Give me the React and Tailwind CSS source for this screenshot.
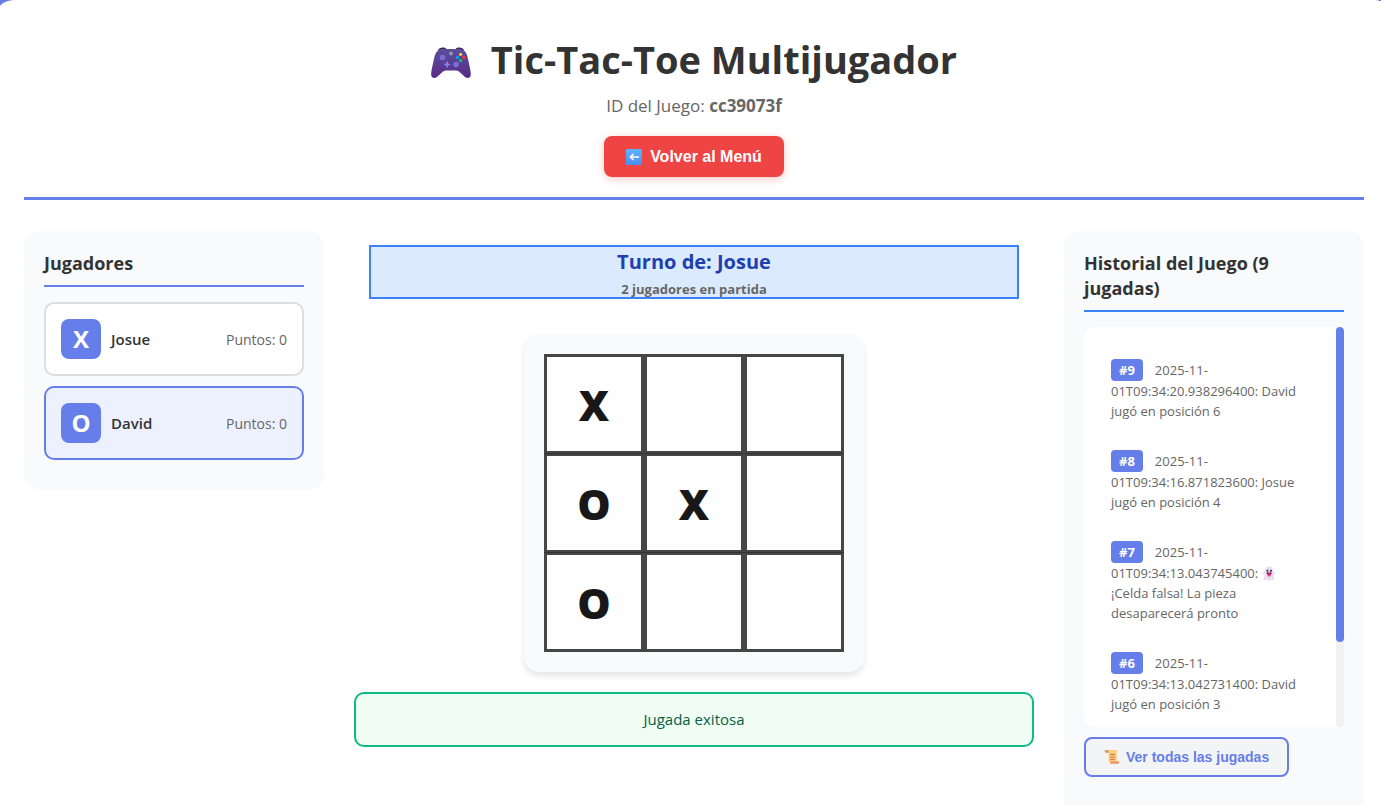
import React from "react";

function Gamepad() {
  return (
    <svg viewBox="0 0 40 32" className="mt-2 h-8 w-10" aria-hidden="true">
      <defs>
        <linearGradient id="pad" x1="0" y1="0" x2="0" y2="1">
          <stop offset="0" stopColor="#5a509c" />
          <stop offset="1" stopColor="#5b2a86" />
        </linearGradient>
      </defs>
      <path d="M7 3c1-2.500 6-3.500 8-1.500v2H7zM33 3c-1-2.500-6-3.500-8-1.500v2h8z" fill="#4a1450" />
      <path d="M8 3c2-1.500 5-1.500 7-1h10c2-.5 5-.5 7 1 3 1 4.500 6 5.500 11s2.500 11 2.300 14c-.2 3-4 4-6.300 1.500L28 24.500c-1-.8-2-1-3-1H15c-1 0-2 .2-3 1l-5.500 5C4.200 32 .4 31 .2 28 0 25 1.500 19 2.500 14S5 4 8 3z" fill="url(#pad)" />
      <circle cx="11.500" cy="10.500" r="2.800" fill="#7a6fd6" />
      <circle cx="25" cy="17.500" r="2.800" fill="#7a6fd6" />
      <circle cx="20" cy="6.500" r="1.900" fill="#9c94b4" />
      <path d="M15.300 14.500h1.600v2.200h2.200v1.600h-2.200v2.200h-1.600v-2.200h-2.200v-1.600h2.200z" fill="#8b83f0" />
      <circle cx="29.600" cy="7.400" r="1.700" fill="#f9c23c" />
      <circle cx="32.700" cy="10.500" r="1.700" fill="#f8312f" />
      <circle cx="26.500" cy="10.500" r="1.700" fill="#00a6ed" />
      <circle cx="29.600" cy="13.600" r="1.700" fill="#00d26a" />
    </svg>
  );
}

function LeftArrow() {
  return (
    <svg viewBox="0 0 16 16" className="size-4" aria-hidden="true">
      <defs>
        <linearGradient id="tile" x1="0" y1="0" x2="0" y2="1">
          <stop offset="0" stopColor="#5fb4ff" />
          <stop offset="1" stopColor="#4a8df0" />
        </linearGradient>
      </defs>
      <rect width="16" height="16" rx="1" fill="url(#tile)" />
      <path d="M12.500 8H4.500M7 5.500L4.300 8 7 10.500" fill="none" stroke="#fff" strokeWidth="1.700" strokeLinecap="round" strokeLinejoin="round" />
    </svg>
  );
}

function Ghost() {
  return (
    <svg viewBox="0 0 14 15" className="inline-block h-[15px] w-3.5 align-[-3px]" aria-hidden="true">
      <path d="M7 .5c2.700 0 4 2 4.200 5 .8.300 2 .8 2.300 1.700-.4 1-1.300 1.100-2 .8.100 2 .4 4 1 6-1.300.6-2-.7-3-.3-.9.500-1.500.6-2.500.6s-1.700-.1-2.600-.6c-1-.4-1.700.9-3 .3.700-2 1-4 1.100-6-.7.300-1.600.2-2-.8.300-.9 1.500-1.400 2.300-1.700C3 2.500 4.300.5 7 .5z" fill="#e9dcee" />
      <circle cx="5.500" cy="4.800" r="1" fill="#321b41" />
      <circle cx="9" cy="4.800" r="1" fill="#321b41" />
      <path d="M4.500 6.500h5.200c0 1.700-1 2.500-2.600 2.500S4.500 8.200 4.500 6.500z" fill="#5b1a4a" />
      <path d="M5.800 7.300h2.700v1.900c0 1.800-2.700 1.800-2.700 0z" fill="#f8216a" />
    </svg>
  );
}

function Scroll() {
  return (
    <svg viewBox="0 0 16 16" className="size-4" aria-hidden="true">
      <path d="M2.500 1h11.300c-.9.700-1 1.500-1 2.500V13H4.500V4H2.500z" fill="#ffce7c" />
      <path d="M.8 1.200h3.700v2.600H2.200C1 3.800.5 2 .8 1.200z" fill="#d9915f" />
      <path d="M6.200 12.300h9.100c.3 1.200-.3 2.500-1.500 2.500H5.500c1-.6 1-1.500.7-2.500z" fill="#e79a62" />
      <path d="M6 5.500h5M6 8h5M6 10.300h5" stroke="#c9764d" strokeWidth="1" />
    </svg>
  );
}

const players = [
  { mark: "X", name: "Josue", points: 0, active: false },
  { mark: "O", name: "David", points: 0, active: true },
];

const cells = ["X", "", "", "O", "X", "", "O", "", ""];

const moves = [
  { n: 9, time: "2025-11-01T09:34:20.938296400:", text: "David jugó en posición 6" },
  { n: 8, time: "2025-11-01T09:34:16.871823600:", text: "Josue jugó en posición 4" },
  { n: 7, time: "2025-11-01T09:34:13.043745400:", ghost: true, text: "¡Celda falsa! La pieza desaparecerá pronto" },
  { n: 6, time: "2025-11-01T09:34:13.042731400:", text: "David jugó en posición 3" },
];

function Header() {
  return (
    <header className="flex flex-col items-center border-b-3 border-[#667eea] pb-5 text-center">
      <h1 className="flex items-center gap-5 text-[38px] leading-[58px] font-bold text-[#333]">
        <Gamepad />
        Tic-Tac-Toe Multijugador
      </h1>
      <p className="mt-1 text-[17px] leading-7 text-[#666]">
        ID del Juego: <strong className="font-bold">cc39073f</strong>
      </p>
      <button
        type="button"
        className="mt-4 flex h-[41px] items-center gap-2 rounded-lg bg-[#ef4444] px-[22px] font-['Liberation_Sans',Arial,sans-serif] text-base font-bold text-white shadow-[0_2px_8px_rgba(239,68,68,0.3)]"
      >
        <LeftArrow />
        Volver al Menú
      </button>
    </header>
  );
}

function Players() {
  return (
    <aside className="rounded-[15px] bg-[#f8fafc] px-5 pt-5 pb-[30px]">
      <h2 className="border-b-2 border-[#667eea] pb-[9px] text-lg leading-[25px] font-bold text-[#333]">Jugadores</h2>
      <ul className="mt-[15px] flex flex-col gap-2.5">
        {players.map((p) => (
          <li
            key={p.name}
            className={
              "flex items-center gap-2.5 rounded-[10px] border-2 p-[15px] " +
              (p.active ? "border-[#667eea] bg-[#edf1fe]" : "border-[#ddd] bg-white")
            }
          >
            <span className="flex size-10 items-center justify-center rounded-lg bg-[#667eea] text-2xl font-bold text-white">{p.mark}</span>
            <span className="flex-1 text-[15px] font-semibold text-[#333]">{p.name}</span>
            <span className="text-[14px] text-[#666]">Puntos: {p.points}</span>
          </li>
        ))}
      </ul>
    </aside>
  );
}

function Board() {
  return (
    <main className="flex flex-col items-center pt-3.5">
      <div className="flex w-full flex-col px-[15px]">
        <div className="border-2 border-[#3b82f6] bg-[#dbeafe] text-center font-bold">
          <p className="text-xl leading-[30px] text-[#1e40af]">Turno de: Josue</p>
          <p className="mt-1 text-[13px] leading-4 text-[#666]">2 jugadores en partida</p>
        </div>
      </div>
      <div className="mt-[35px] rounded-[15px] bg-[#f8fafc] p-5 shadow-[0_4px_6px_rgba(0,0,0,0.1)]">
        <div className="grid grid-cols-[repeat(3,100px)] pt-px">
          {cells.map((c, i) => (
            <button
              key={i}
              type="button"
              aria-label={"Celda " + i}
              className="-mt-px flex h-[100px] items-center justify-center border-3 border-[#333] bg-white text-[42px] font-extrabold text-black opacity-90"
            >
              {c}
            </button>
          ))}
        </div>
      </div>
      <p className="mt-5 w-full rounded-[10px] border-2 border-[#10b981] bg-[#f0fdf4] py-[13px] text-center text-[15px] leading-[25px] text-[#065f46]" role="status">
        Jugada exitosa
      </p>
    </main>
  );
}

function History() {
  return (
    <aside className="rounded-[15px] bg-[#f8fafc] px-5 pt-5 pb-14">
      <h2 className="border-b-2 border-[#3b82f6] pb-[9px] text-lg leading-[25px] font-bold text-[#333]">
        Historial del Juego (9 jugadas)
      </h2>
      <div className="mt-[15px] flex h-[400px] overflow-hidden rounded-l-[10px] rounded-r bg-white">
        <ol className="flex flex-1 flex-col gap-[29px] pt-8 pr-6 pl-[27px] text-[13px] leading-5 text-[#666]">
          {moves.map((m) => (
            <li key={m.n}>
              <span className="mr-3 inline-block rounded-[4px] bg-[#667eea] px-2 leading-[22px] font-bold text-white">#{m.n}</span>
              {m.ghost ? (
                <>
                  {m.time} <Ghost /> {m.text}
                </>
              ) : (
                `${m.time} ${m.text}`
              )}
            </li>
          ))}
        </ol>
        <div className="w-2 rounded bg-[#f1f1f1]">
          <div className="h-[315px] rounded bg-[#667eea]" />
        </div>
      </div>
      <button
        type="button"
        className="mt-2.5 flex h-10 items-center gap-1.5 rounded-lg border-2 border-[#667eea] bg-[#f3f4f6] px-[18px] font-['Liberation_Sans',Arial,sans-serif] text-sm font-bold text-[#667eea]"
      >
        <Scroll />
        Ver todas las jugadas
      </button>
    </aside>
  );
}

export default function App() {
  return (
    <div className="h-screen overflow-x-hidden overflow-y-auto bg-linear-to-br from-[#667eea] to-[#764ba2] font-['Open_Sans','Noto_Sans',sans-serif] [scrollbar-width:none]">
      <div className="-mr-[13px] -ml-1.5 rounded-[20px] bg-white p-[30px]">
        <Header />
        <div className="mt-[31px] grid grid-cols-[300px_minmax(0,1fr)_300px] items-start gap-[30px]">
          <Players />
          <Board />
          <History />
        </div>
      </div>
    </div>
  );
}
